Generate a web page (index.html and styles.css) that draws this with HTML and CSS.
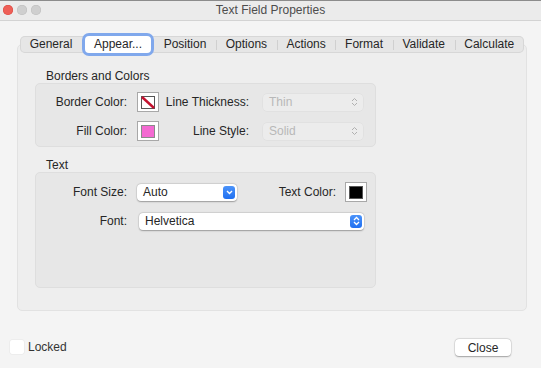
FILE: index.html
```
<!DOCTYPE html>
<html lang="en">
<head>
    <meta charset="UTF-8">
    <meta name="viewport" content="width=device-width, initial-scale=1.0">
    <title>Text Field Properties</title>
    <link rel="stylesheet" href="styles.css">
</head>
<body>
    <div class="window">
        <div class="titlebar">
            <div class="lights">
                <span class="light red"></span>
                <span class="light"></span>
                <span class="light"></span>
            </div>
            <div class="title">Text Field Properties</div>
        </div>

        <div class="main">
            <div class="tabs">
                <div class="tab">General</div>
                <div class="tab active">Appear...</div>
                <div class="tab">Position</div>
                <div class="tab sep">Options</div>
                <div class="tab sep">Actions</div>
                <div class="tab sep">Format</div>
                <div class="tab sep">Validate</div>
                <div class="tab sep">Calculate</div>
            </div>

            <div class="panel">
                <div class="group-label">Borders and Colors</div>
                <div class="group group-borders">
                    <div class="row">
                        <span class="label">Border Color:</span>
                        <span class="swatch">
                            <svg class="chip" width="14" height="13" viewBox="0 0 14 13">
                                <rect x="0.5" y="0.5" width="13" height="12" fill="#fff" stroke="#555"/>
                                <line x1="1" y1="1" x2="13" y2="12" stroke="#c4122f" stroke-width="2.4"/>
                            </svg>
                        </span>
                        <span class="label label-mid">Line Thickness:</span>
                        <div class="select disabled">
                            <span>Thin</span>
                            <svg class="updown" width="7" height="10" viewBox="0 0 7 10">
                                <path d="M1 4 L3.5 1.5 L6 4 M1 6 L3.5 8.5 L6 6" fill="none" stroke="#b0b0b0" stroke-width="1"/>
                            </svg>
                        </div>
                    </div>
                    <div class="row">
                        <span class="label">Fill Color:</span>
                        <span class="swatch"><span class="chip fill-pink"></span></span>
                        <span class="label label-mid">Line Style:</span>
                        <div class="select disabled">
                            <span>Solid</span>
                            <svg class="updown" width="7" height="10" viewBox="0 0 7 10">
                                <path d="M1 4 L3.5 1.5 L6 4 M1 6 L3.5 8.5 L6 6" fill="none" stroke="#b0b0b0" stroke-width="1"/>
                            </svg>
                        </div>
                    </div>
                </div>

                <div class="group-label second">Text</div>
                <div class="group group-text">
                    <div class="row">
                        <span class="label">Font Size:</span>
                        <div class="select small">
                            <span>Auto</span>
                            <span class="select-btn">
                                <svg width="7" height="5" viewBox="0 0 7 5">
                                    <path d="M1 1 L3.5 3.5 L6 1" fill="none" stroke="#fff" stroke-width="1.4"/>
                                </svg>
                            </span>
                        </div>
                        <span class="label label-color">Text Color:</span>
                        <span class="swatch"><span class="chip fill-black"></span></span>
                    </div>
                    <div class="row">
                        <span class="label">Font:</span>
                        <div class="select wide">
                            <span>Helvetica</span>
                            <span class="select-btn">
                                <svg width="7" height="10" viewBox="0 0 7 10">
                                    <path d="M1 4 L3.5 1.5 L6 4 M1 6 L3.5 8.5 L6 6" fill="none" stroke="#fff" stroke-width="1.3"/>
                                </svg>
                            </span>
                        </div>
                    </div>
                </div>
            </div>
        </div>

        <div class="footer">
            <label class="check">
                <span class="box"></span>
                Locked
            </label>
            <button class="btn">Close</button>
        </div>
    </div>
</body>
</html>
```

FILE: styles.css
```
body {
    margin: 0;
    font-family: "Liberation Sans", Arial, sans-serif;
    font-size: 12px;
    color: #262626;
    background: #f4f4f4;
}

.window {
    width: 541px;
    height: 368px;
    overflow: hidden;
    background: #f4f4f4;
}

/* title bar */
.titlebar {
    position: relative;
    height: 21px;
    box-sizing: border-box;
    background: #ebebeb;
    border-top: 1px solid #8c8c8c;
    border-bottom: 1px solid #d3d3d3;
}

.lights {
    display: flex;
    gap: 4px;
    padding: 4px 0 0 3px;
}

.light {
    width: 10px;
    height: 10px;
    border-radius: 50%;
    background: #cfcfcf;
    box-shadow: inset 0 0 0 0.5px #bdbdbd;
}

.light.red {
    background: #ee5f57;
    box-shadow: inset 0 0 0 0.5px #d9473f;
}

.title {
    position: absolute;
    left: 0;
    right: 0;
    top: 2px;
    text-align: center;
    color: #4d4d4d;
    font-size: 12px;
}

/* tabs + panel */
.main {
    padding: 15px 14px 0 17px;
}

.tabs {
    position: relative;
    z-index: 1;
    display: flex;
    align-items: center;
    height: 17px;
    margin: 0 3px -9px;
    background: #e6e6e6;
    border-radius: 5px;
    box-shadow: inset 0 0 0 1px #d7d7d7;
}

.tab {
    flex: 1 1 auto;
    position: relative;
    text-align: center;
    padding: 0 6px;
    line-height: 17px;
    color: #262626;
}

.tab.sep::before {
    content: "";
    position: absolute;
    left: 0;
    top: 4px;
    height: 10px;
    border-left: 1px solid #d0d0d0;
}

.tab.active {
    flex: 0 0 66px;
    padding: 0;
    margin: 0 3px;
    background: #fff;
    border-radius: 4px;
    box-shadow: 0 0 0 3px #80a8ec;
}

.panel {
    height: 267px;
    box-sizing: border-box;
    padding: 24px 0 0 17px;
    background: #eeeeee;
    border: 1px solid #e2e2e2;
    border-radius: 5px;
}

.group-label {
    line-height: 14px;
    margin-left: 11px;
}

.group-label.second {
    margin-top: 11px;
}

.group {
    width: 341px;
    box-sizing: border-box;
    background: #e7e7e7;
    border: 1px solid #dedede;
    border-radius: 5px;
    display: flex;
    flex-direction: column;
    gap: 9px;
}

.group-borders {
    height: 64px;
    padding-top: 8px;
}

.group-text {
    height: 116px;
    padding-top: 9px;
}

.row {
    display: flex;
    align-items: center;
    height: 20px;
}

.label {
    width: 91px;
    text-align: right;
    margin-right: 10px;
    flex: none;
}

.label-mid {
    width: 90px;
    margin-right: 14px;
}

.label-color {
    width: 99px;
    margin-right: 9px;
}

/* colour wells */
.swatch {
    display: flex;
    align-items: center;
    justify-content: center;
    width: 22px;
    height: 20px;
    box-sizing: border-box;
    background: #fff;
    border: 1px solid #a8a8a8;
    flex: none;
}

.chip {
    display: block;
    width: 14px;
    height: 13px;
    box-sizing: border-box;
}

.fill-pink {
    background: #f46ad2;
    border: 1px solid #8a8a8a;
}

.fill-black {
    background: #000;
    border: 1px solid #555;
}

/* pop-up buttons */
.select {
    display: flex;
    align-items: center;
    justify-content: space-between;
    height: 17px;
    box-sizing: border-box;
    padding: 0 2px 0 6px;
    border-radius: 4px;
    background: #fff;
    box-shadow: 0 0.5px 1.5px rgba(0, 0, 0, 0.3), 0 0 0 0.5px rgba(0, 0, 0, 0.08);
    flex: none;
}

.select.disabled {
    width: 100px;
    padding-right: 5px;
    background: #ececec;
    color: #b8b8b8;
    box-shadow: 0 0 0 0.5px #dcdcdc;
}

.select.small {
    width: 100px;
}

.select.wide {
    width: 225px;
    margin-left: 2px;
}

.select-btn {
    display: flex;
    align-items: center;
    justify-content: center;
    width: 12px;
    height: 13px;
    border-radius: 3px;
    background: linear-gradient(#4b93fa, #1f6ff0);
}

/* footer */
.footer {
    display: flex;
    align-items: center;
    justify-content: space-between;
    padding: 26px 30px 0 10px;
}

.check {
    display: flex;
    align-items: center;
    gap: 4px;
    color: #333;
}

.check .box {
    width: 14px;
    height: 14px;
    background: #fff;
    border-radius: 2px;
    box-shadow: 0 0 0 0.5px #e6e6e6;
}

.btn {
    width: 56px;
    height: 17px;
    padding: 0;
    border: none;
    border-radius: 4px;
    background: #fff;
    font-family: inherit;
    font-size: 12px;
    color: #262626;
    box-shadow: 0 0.5px 1.5px rgba(0, 0, 0, 0.3), 0 0 0 0.5px rgba(0, 0, 0, 0.1);
    margin-top: 2px;
}
```
